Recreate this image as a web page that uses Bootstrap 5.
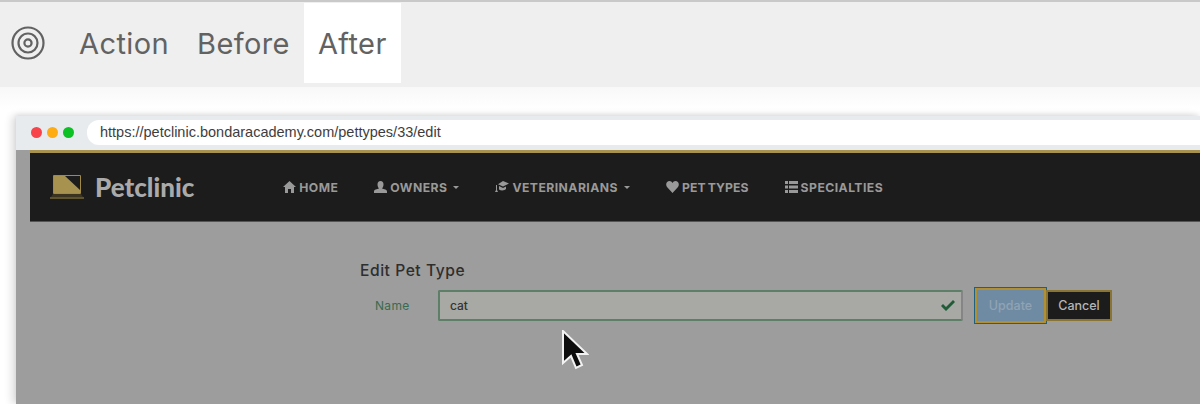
<!DOCTYPE html>
<html lang="en">
<head>
  <meta charset="UTF-8" />
  <title>Action Before After</title>
  <link href="https://cdn.jsdelivr.net/npm/bootstrap@5.3.0/dist/css/bootstrap.min.css" rel="stylesheet" />
  <style>
    html, body { height: 404px; overflow: hidden; background: #fff; }
    .top-tabs { height: 87px; background: #efefef; border-top: 2px solid #c9c9c9; color: #626262; font: 400 29px Inter, sans-serif; letter-spacing: .4px; padding: 0 0 3px 11px; }
    .target-icon { margin-right: 20px; }
    .tab-item { height: 80px; padding: 0 14px; line-height: 81px; margin-top: 1px; align-self: flex-start; }
    .tab-after { background: #fff; }
    .stage { height: 317px; padding: 29px 0 0 16px; background: linear-gradient(#f8f8f8, #fff 22px); }
    .mac-window { position: relative; height: 288px; background: #9d9d9d; box-shadow: -4px 0 8px rgba(0,0,0,.14), 0 -2px 4px rgba(0,0,0,.06); }
    .chrome-bar { height: 34px; background: #e8ebee; padding: 4px 0 5px 15px; }
    .dot { width: 11px; height: 11px; border-radius: 50%; margin-right: 5px; }
    .dot-red { background: #f8434a; }
    .dot-amber { background: #ffab12; }
    .dot-green { background: #0cc124; }
    .url-pill { flex: 1; margin-left: 8px; height: 25px; background: #fff; border-radius: 12px 0 0 12px; padding-left: 13px; font: 400 14.5px/25px "Liberation Sans", sans-serif; color: #3d3d3d; }
    .app-nav { height: 72px; margin-left: 14px; background: #1c1c1c; border-top: 3px solid #a8924f; border-bottom: 1px solid #555; padding: 0 0 0 20px; }
    .brand-name { font: 900 26px Lato, sans-serif; color: #aaa; margin: 0 89px 0 11px; }
    .nav-entry { font: 700 12.2px Inter, sans-serif; letter-spacing: .45px; color: #999; margin-right: 36px; white-space: nowrap; display: flex; align-items: center; gap: 3px; }
    .nav-tight { letter-spacing: .1px; word-spacing: -1px; }
    .nav-caret { width: 0; height: 0; border: 3px solid transparent; border-top-color: #999; border-bottom: 0; margin-left: 3px; }
    .form-area { padding: 39px 0 0 344px; }
    .form-title { font: 500 15.6px Inter, sans-serif; letter-spacing: .55px; color: #2e2e2e; margin: 0 0 8px; }
    .name-label { width: 78px; padding-left: 15px; font: 400 12px Inter, sans-serif; letter-spacing: .3px; color: #3c6a4c; }
    .name-box { width: 525px; height: 31px; background: #a8a8a4; border: 2px solid #5d7f68; border-right-color: #858585; border-radius: 2px; padding: 0 6px 0 10px; font: 500 12px Inter, sans-serif; color: #333; }
    .update-btn, .cancel-btn { font: 500 12.5px Inter, sans-serif; }
    .update-btn { width: 71px; height: 35px; margin-left: 12px; background: #6f8ba3; color: #8fa3b4; border: 2px solid #b08f35; outline: 1px solid #1f607f; }
    .cancel-btn { width: 66px; height: 31px; background: #1c1c1c; color: #b5b5b5; border: 2px solid #8a7434; }
    .pointer-mark { position: absolute; left: 545px; top: 214px; }
  </style>
</head>
<body>
  <div class="top-tabs d-flex align-items-center">
    <svg class="target-icon" width="34" height="34" viewBox="0 0 34 34" fill="none" stroke="#626262" stroke-width="2.2">
      <circle cx="17" cy="17" r="15.5" /><circle cx="17" cy="17" r="9.5" /><circle cx="17" cy="17" r="3.6" />
    </svg>
    <div class="tab-item">Action</div>
    <div class="tab-item">Before</div>
    <div class="tab-item tab-after">After</div>
  </div>

  <div class="stage">
    <div class="mac-window">
      <div class="chrome-bar d-flex align-items-center">
        <span class="dot dot-red"></span>
        <span class="dot dot-amber"></span>
        <span class="dot dot-green"></span>
        <div class="url-pill">https://petclinic.bondaracademy.com/pettypes/33/edit</div>
      </div>

      <div class="app-nav d-flex align-items-center">
        <svg width="34" height="26" viewBox="0 0 34 26">
          <path d="M3.500 1.500h27v18h-27z" fill="#1c1c1c" stroke="#a08a45" stroke-width="1" />
          <path d="M4 2h11l15 14v3H4z" fill="#a8924f" />
          <path d="M3 20h28l2 3H1z" fill="#3a3320" />
          <path d="M0 24h34" stroke="#a08a45" stroke-width="1.200" />
        </svg>
        <span class="brand-name">Petclinic</span>
        <span class="nav-entry">
          <svg width="13" height="12" viewBox="0 0 13 12" fill="#999"><path d="M6.5 0 13 6h-2v6H8V8H5v4H2V6H0z" /></svg>HOME
        </span>
        <span class="nav-entry">
          <svg width="13" height="12" viewBox="0 0 13 12" fill="#999"><path d="M6.5 0c2 0 3 1.500 3 3.500S8.500 7 8 7.500c2 .5 5 1 5 3V12H0v-1.500c0-2 3-2.500 5-3C4.500 7 3.500 5.500 3.500 3.500S4.500 0 6.500 0z" /></svg>OWNERS<span class="nav-caret"></span>
        </span>
        <span class="nav-entry">
          <svg width="14" height="12" viewBox="0 0 14 12" fill="#999"><path d="M8 0l6 2.500-6 3-5-2.200L8 0zM4 5l4 2 3-1.500V8c-1 1.500-5 2-7 .5zM2 4v5l1 2H0l1-2V4z" /></svg>VETERINARIANS<span class="nav-caret"></span>
        </span>
        <span class="nav-entry nav-tight">
          <svg width="13" height="12" viewBox="0 0 13 12" fill="#999"><path d="M6.500 12 1 6C-1 3 1 0 3.500 0c1.300 0 2.400.7 3 2 .6-1.300 1.700-2 3-2C12 0 14 3 12 6z" /></svg>PET TYPES
        </span>
        <span class="nav-entry">
          <svg width="13" height="12" viewBox="0 0 13 12" fill="#999"><path d="M0 0h3v3H0zM4 0h9v3H4zM0 4.500h3v3H0zM4 4.500h9v3H4zM0 9h3v3H0zM4 9h9v3H4z" /></svg>SPECIALTIES
        </span>
      </div>

      <div class="form-area">
        <h2 class="form-title">Edit Pet Type</h2>
        <div class="d-flex align-items-center">
          <div class="name-label">Name</div>
          <div class="name-box d-flex align-items-center justify-content-between">
            <span>cat</span>
            <svg width="14" height="11" viewBox="0 0 14 11" fill="#1f5c38"><path d="M0 6l2-2 3 3 7-7 2 2-9 9z" /></svg>
          </div>
          <button type="button" class="btn rounded-0 p-0 update-btn">Update</button>
          <button type="button" class="btn rounded-0 p-0 cancel-btn">Cancel</button>
        </div>
      </div>

      <svg class="pointer-mark" width="28" height="42" viewBox="0 0 28 42">
        <path d="M2 1v32l8-7 5 12 6-3-5-11h10z" fill="#0d0d0d" stroke="#f2f2f2" stroke-width="2" />
      </svg>
    </div>
  </div>
  <script src="https://cdn.jsdelivr.net/npm/bootstrap@5.3.0/dist/js/bootstrap.bundle.min.js"></script>
</body>
</html>
